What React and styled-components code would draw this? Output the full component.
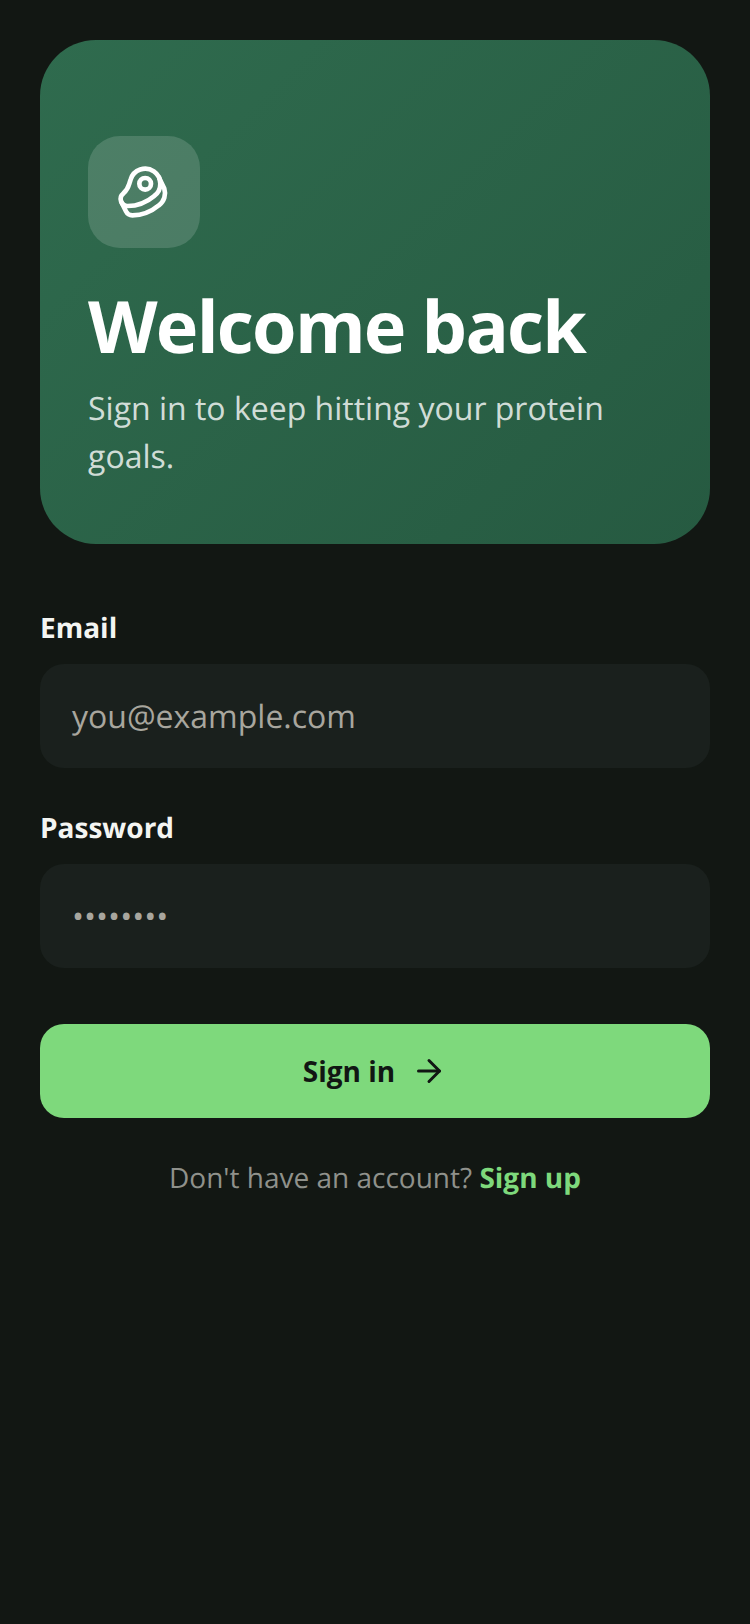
import React from 'react';
import styled, { createGlobalStyle } from 'styled-components';
import { Beef, ArrowRight } from 'lucide-react';

const GlobalStyle = createGlobalStyle`
  html, body {
    margin: 0;
    padding: 0;
    background: #121713;
  }
  * { box-sizing: border-box; }
`

const Page = styled.div`
  width: 750px;
  height: 1624px;
  padding: 40px;
  background: #121713;
  font-family: "Open Sans", sans-serif;
  text-rendering: geometricPrecision;
  overflow: hidden;
`

const Hero = styled.div`
  height: 504px;
  padding: 96px 48px 0;
  border-radius: 56px;
  background: linear-gradient(135deg, #2f6b4e 0%, #265a41 100%);
  margin-bottom: 64px;
`

const IconBox = styled.div`
  width: 112px;
  height: 112px;
  border-radius: 32px;
  background: rgba(255, 255, 255, 0.15);
  color: #fff;
  display: flex;
  justify-content: center;
  align-items: center;
  margin-bottom: 32px;
`

const Title = styled.h1`
  margin: 0 0 13px;
  font-size: 72px;
  line-height: 92px;
  font-weight: 700;
  color: #fff;
  letter-spacing: -1.76px;
`

const Subtitle = styled.p`
  margin: 0;
  font-size: 32px;
  line-height: 48px;
  color: rgba(255, 255, 255, 0.8);
`

const Field = styled.div`
  margin-bottom: 40px;
`

const Label = styled.div`
  font-size: 28px;
  line-height: 40px;
  font-weight: 700;
  color: #f4f5f2;
  margin-bottom: 16px;
`

const InputBox = styled.div`
  height: 104px;
  padding: 0 32px;
  border-radius: 24px;
  background: #1a201d;
  display: flex;
  align-items: center;
  font-size: 32px;
  color: #a8a69e;
`

const Button = styled.button`
  width: 100%;
  height: 94px;
  margin-top: 56px;
  border: none;
  border-radius: 24px;
  background: #7ed97c;
  color: #111613;
  font-family: inherit;
  font-size: 28px;
  font-weight: 700;
  display: flex;
  justify-content: center;
  align-items: center;
  gap: 16px;
`

const Footer = styled.p`
  margin: 40px 0 0;
  text-align: center;
  font-size: 28px;
  line-height: 40px;
  color: #8f918b;
`

const FooterLink = styled.span`
  font-weight: 700;
  color: #7ed97c;
`

function App() {
  return (
    <Page>
      <GlobalStyle />
      <Hero>
        <IconBox><Beef size={56} strokeWidth={2} /></IconBox>
        <Title>Welcome back</Title>
        <Subtitle>Sign in to keep hitting your protein goals.</Subtitle>
      </Hero>
      <Field>
        <Label>Email</Label>
        <InputBox>you@example.com</InputBox>
      </Field>
      <Field>
        <Label>Password</Label>
        <InputBox>••••••••</InputBox>
      </Field>
      <Button>Sign in <ArrowRight size={36} /></Button>
      <Footer>Don't have an account? <FooterLink>Sign up</FooterLink></Footer>
    </Page>
  )
}

export default App
